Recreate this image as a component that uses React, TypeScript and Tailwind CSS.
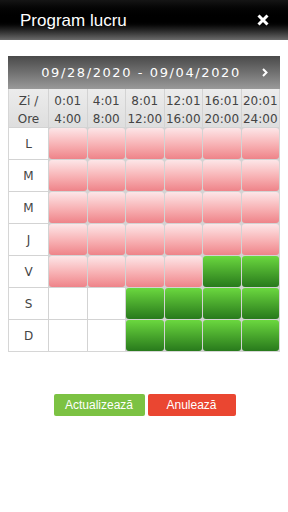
import React from 'react';

const days = ['L', 'M', 'M', 'J', 'V', 'S', 'D'];
const slots = [
  ['0:01', '4:00'],
  ['4:01', '8:00'],
  ['8:01', '12:00'],
  ['12:01', '16:00'],
  ['16:01', '20:00'],
  ['20:01', '24:00'],
];

// p = pink (inchis), g = green (deschis), e = empty
const schedule: string[][] = [
  ['p', 'p', 'p', 'p', 'p', 'p'],
  ['p', 'p', 'p', 'p', 'p', 'p'],
  ['p', 'p', 'p', 'p', 'p', 'p'],
  ['p', 'p', 'p', 'p', 'p', 'p'],
  ['p', 'p', 'p', 'p', 'g', 'g'],
  ['e', 'e', 'g', 'g', 'g', 'g'],
  ['e', 'e', 'g', 'g', 'g', 'g'],
];

function Cell({ kind }: { kind: string }) {
  if (kind === 'p') {
    return <div className="h-[31px] rounded-[3px] bg-gradient-to-b from-[#fce6e8] to-[#ee8389]" />;
  }
  if (kind === 'g') {
    return <div className="h-[31px] rounded-[3px] bg-gradient-to-b from-[#6bd83f] to-[#287a1c]" />;
  }
  return <div className="h-[31px] bg-white" />;
}

export default function App() {
  return (
    <div className="w-[288px] h-[512px] bg-white font-['Liberation_Sans',Arial,sans-serif]">
      {/* Title bar */}
      <div className="h-10 flex items-center justify-between pl-5 pr-[19px] bg-gradient-to-b from-[#151515] via-[#000] to-[#6c6c6c]">
        <span className="text-white text-[17px] leading-none">Program lucru</span>
        <svg width="12" height="12" viewBox="0 0 12 12">
          <path d="M1.5 1.5 L10.5 10.5 M10.5 1.5 L1.5 10.5" stroke="white" strokeWidth="3" />
        </svg>
      </div>

      <div className="mx-2 mt-4 font-['DejaVu_Sans',Verdana,sans-serif]">
        {/* Date range */}
        <div className="h-[33px] flex items-center justify-center relative bg-gradient-to-b from-[#4a4a4a] to-[#9a9a9a]">
          <span className="text-white text-[13px] tracking-[1.6px] ml-[-6px]">09/28/2020 - 09/04/2020</span>
          <svg width="6" height="9" viewBox="0 0 6 9" className="absolute right-[12px] top-[12px]">
            <path d="M1 1 L4.5 4.5 L1 8" stroke="white" strokeWidth="2" fill="none" />
          </svg>
        </div>

        <div className="grid grid-cols-[39px_repeat(6,1fr)] gap-px bg-[#d3d3d3] border-b border-l border-r border-[#d6d6d6]">
          <div className="h-[38px] pt-[3px] flex flex-col items-center justify-center bg-gradient-to-b from-[#ececec] to-[#dedede] text-[#444] text-[12px] leading-[18px]">
            <span>Zi /</span>
            <span>Ore</span>
          </div>
          {slots.map(([a, b], i) => (
            <div
              key={i}
              className="h-[38px] pt-[3px] flex flex-col items-center justify-center bg-gradient-to-b from-[#ececec] to-[#dedede] text-[#444] text-[12px] leading-[18px]"
            >
              <span>{a}</span>
              <span>{b}</span>
            </div>
          ))}
          {days.map((d, r) => (
            <React.Fragment key={r}>
              <div className="h-[31px] flex items-center justify-center bg-white text-[#444] text-[12px]">{d}</div>
              {schedule[r].map((k, c) => (
                <Cell key={c} kind={k} />
              ))}
            </React.Fragment>
          ))}
        </div>
      </div>

      <div className="flex justify-center gap-[3px] mt-[42px] ml-[1px]">
        <button className="w-[91px] h-[22px] rounded-[2px] bg-[#7cc243] text-white text-[12px]">Actualizează</button>
        <button className="w-[88px] h-[22px] rounded-[2px] bg-[#ea4631] text-white text-[12px]">Anulează</button>
      </div>
    </div>
  );
}
